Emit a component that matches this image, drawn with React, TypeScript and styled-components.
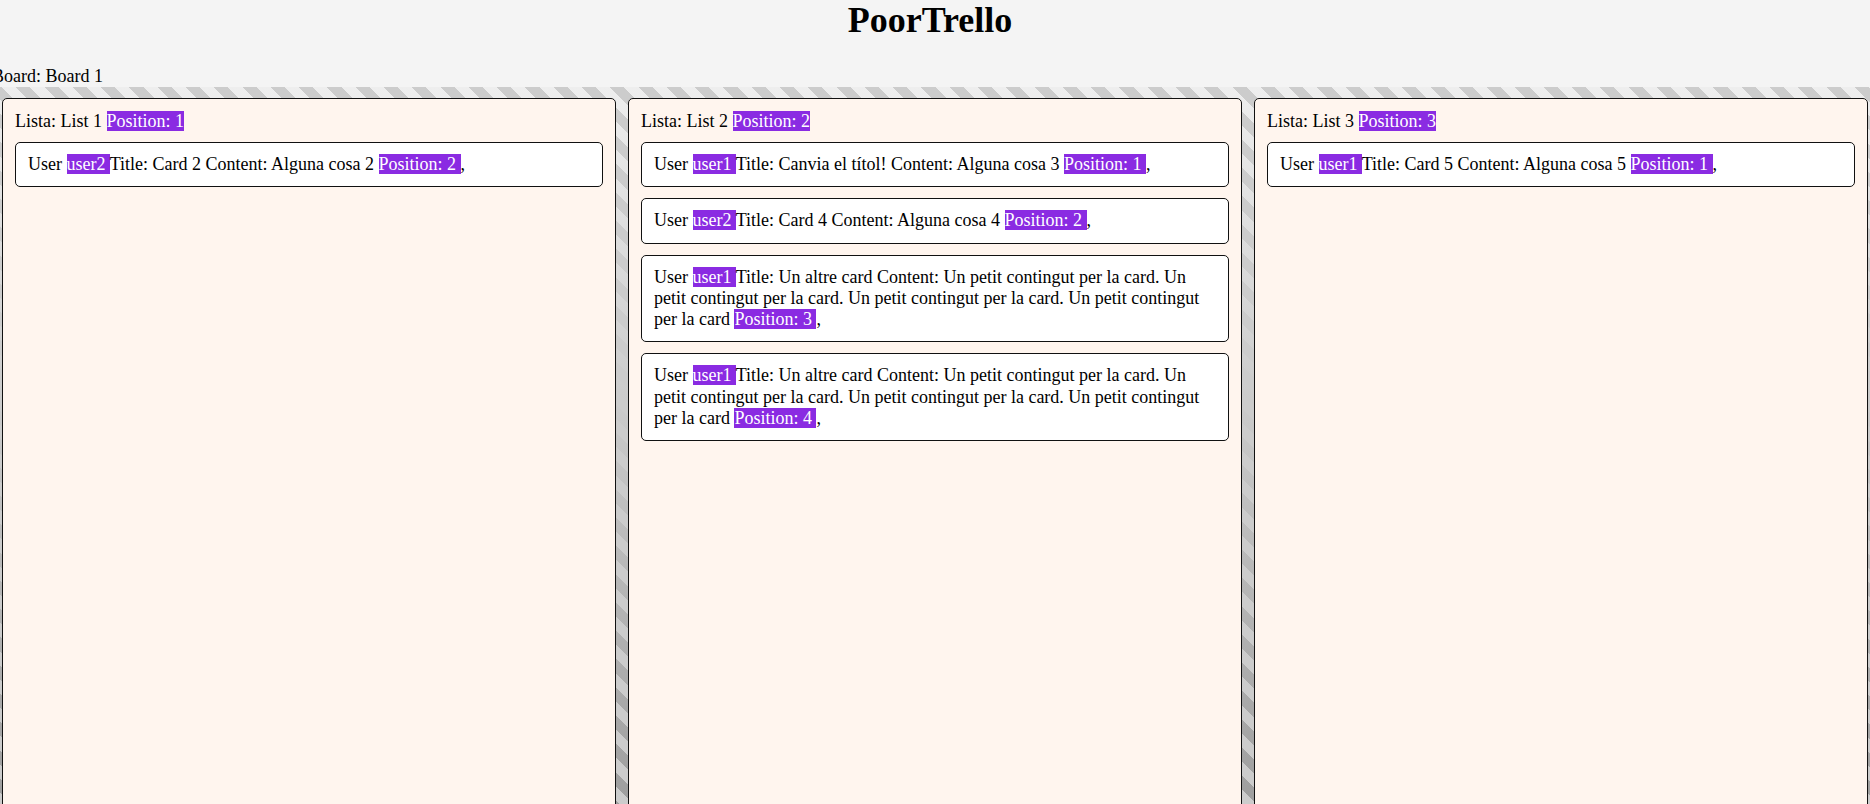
import React from 'react';
import styled, { createGlobalStyle } from 'styled-components';

const GlobalStyle = createGlobalStyle`
  html, body {
    margin: 0;
    padding: 0;
    background: #f4f4f4;
    font-family: "Liberation Serif", "Times New Roman", serif;
    font-size: 18px;
    color: #000;
    overflow: hidden;
  }
`;

const Page = styled.div`
  display: flex;
  flex-direction: column;
`;

const Title = styled.h1`
  margin: 0 10px 25px 0;
  font-size: 36px;
  font-weight: bold;
  text-align: center;
  line-height: 41px;
`;

const BoardLabel = styled.div`
  margin-left: -8px;
  line-height: 21px;
`;

const Lists = styled.div`
  display: grid;
  grid-template-columns: repeat(3, 1fr);
  column-gap: 12px;
  align-items: start;
  padding: 11px 2px 11px 2px;
  background:
    repeating-linear-gradient(45deg, transparent, transparent 10px, #ccc 10px, #ccc 20px),
    linear-gradient(to bottom, #eee, #999);
`;

const List = styled.div`
  display: flex;
  flex-direction: column;
  gap: 11px;
  min-height: 740px;
  box-sizing: border-box;
  padding: 12px;
  background: #fff5ee;
  border: 1px solid #111;
  border-radius: 5px;
`;

const ListHeader = styled.div`
  line-height: 21px;
  margin-bottom: -1px;
`;

const Badge = styled.span`
  background: blueviolet;
  color: #fff;
`;

const Card = styled.div`
  padding: 11px 12px;
  line-height: 21.3px;
  background: #fff;
  border: 1px solid #111;
  border-radius: 5px;
`;

type CardData = { user: string; title: string; content: string; position: number };
type ListData = { name: string; position: number; cards: CardData[] };

const longText =
  'Un petit contingut per la card. Un petit contingut per la card. Un petit contingut per la card. Un petit contingut per la card';

const lists: ListData[] = [
  {
    name: 'List 1',
    position: 1,
    cards: [{ user: 'user2', title: 'Card 2', content: 'Alguna cosa 2', position: 2 }],
  },
  {
    name: 'List 2',
    position: 2,
    cards: [
      { user: 'user1', title: 'Canvia el títol!', content: 'Alguna cosa 3', position: 1 },
      { user: 'user2', title: 'Card 4', content: 'Alguna cosa 4', position: 2 },
      { user: 'user1', title: 'Un altre card', content: longText, position: 3 },
      { user: 'user1', title: 'Un altre card', content: longText, position: 4 },
    ],
  },
  {
    name: 'List 3',
    position: 3,
    cards: [{ user: 'user1', title: 'Card 5', content: 'Alguna cosa 5', position: 1 }],
  },
];

export default function App() {
  return (
    <>
      <GlobalStyle />
      <Page>
        <Title>PoorTrello</Title>
        <BoardLabel>Board: Board 1</BoardLabel>
        <Lists>
          {lists.map((l) => (
            <List key={l.name}>
              <ListHeader>
                {`Lista: ${l.name} `}
                <Badge>{`Position: ${l.position}`}</Badge>
              </ListHeader>
              {l.cards.map((c) => (
                <Card key={c.position}>
                  {'User '}
                  <Badge>{`${c.user} `}</Badge>
                  {`Title: ${c.title} Content: ${c.content} `}
                  <Badge>{`Position: ${c.position} `}</Badge>
                  {','}
                </Card>
              ))}
            </List>
          ))}
        </Lists>
      </Page>
    </>
  );
}
